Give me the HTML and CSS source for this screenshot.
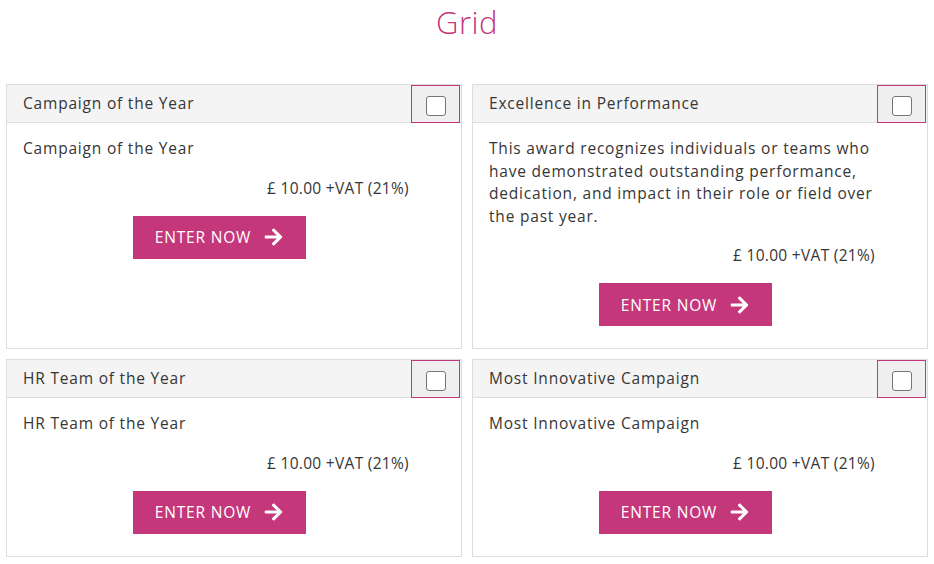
FILE: index.html
```html
<!DOCTYPE html>
<html>
<head>
<meta charset="utf-8">
<link rel="stylesheet" href="styles.css">
</head>
<body>
<h1 class="page-title">Grid</h1>
<div class="grid">
  <div class="card">
    <div class="card-head"><span class="card-name">Campaign of the Year</span><span class="check-cell"><span class="check"></span></span></div>
    <div class="card-body">
      <p class="desc">Campaign of the Year</p>
      <p class="price">£ 10.00 +VAT (21%)</p>
      <div class="btn-row"><a class="btn">ENTER NOW <svg class="arrow" viewBox="0 0 448 512"><path d="M190.5 66.9l22.2-22.2c9.4-9.4 24.6-9.4 33.9 0L441 239c9.4 9.4 9.4 24.6 0 33.9L246.6 467.3c-9.4 9.4-24.6 9.4-33.9 0l-22.2-22.2c-9.5-9.5-9.3-25 .4-34.3L311.4 296H24c-13.3 0-24-10.7-24-24v-32c0-13.3 10.7-24 24-24h287.4L190.9 101.2c-9.8-9.3-10-24.8-.4-34.3z" fill="#fff"/></svg></a></div>
    </div>
  </div>
  <div class="card">
    <div class="card-head"><span class="card-name">Excellence in Performance</span><span class="check-cell"><span class="check"></span></span></div>
    <div class="card-body">
      <p class="desc">This award recognizes individuals or teams who have demonstrated outstanding performance, dedication, and impact in their role or field over the past year.</p>
      <p class="price">£ 10.00 +VAT (21%)</p>
      <div class="btn-row"><a class="btn">ENTER NOW <svg class="arrow" viewBox="0 0 448 512"><path d="M190.5 66.9l22.2-22.2c9.4-9.4 24.6-9.4 33.9 0L441 239c9.4 9.4 9.4 24.6 0 33.9L246.6 467.3c-9.4 9.4-24.6 9.4-33.9 0l-22.2-22.2c-9.5-9.5-9.3-25 .4-34.3L311.4 296H24c-13.3 0-24-10.7-24-24v-32c0-13.3 10.7-24 24-24h287.4L190.9 101.2c-9.8-9.3-10-24.8-.4-34.3z" fill="#fff"/></svg></a></div>
    </div>
  </div>
  <div class="card">
    <div class="card-head"><span class="card-name">HR Team of the Year</span><span class="check-cell"><span class="check"></span></span></div>
    <div class="card-body">
      <p class="desc">HR Team of the Year</p>
      <p class="price">£ 10.00 +VAT (21%)</p>
      <div class="btn-row"><a class="btn">ENTER NOW <svg class="arrow" viewBox="0 0 448 512"><path d="M190.5 66.9l22.2-22.2c9.4-9.4 24.6-9.4 33.9 0L441 239c9.4 9.4 9.4 24.6 0 33.9L246.6 467.3c-9.4 9.4-24.6 9.4-33.9 0l-22.2-22.2c-9.5-9.5-9.3-25 .4-34.3L311.4 296H24c-13.3 0-24-10.7-24-24v-32c0-13.3 10.7-24 24-24h287.4L190.9 101.2c-9.8-9.3-10-24.8-.4-34.3z" fill="#fff"/></svg></a></div>
    </div>
  </div>
  <div class="card">
    <div class="card-head"><span class="card-name">Most Innovative Campaign</span><span class="check-cell"><span class="check"></span></span></div>
    <div class="card-body">
      <p class="desc">Most Innovative Campaign</p>
      <p class="price">£ 10.00 +VAT (21%)</p>
      <div class="btn-row"><a class="btn">ENTER NOW <svg class="arrow" viewBox="0 0 448 512"><path d="M190.5 66.9l22.2-22.2c9.4-9.4 24.6-9.4 33.9 0L441 239c9.4 9.4 9.4 24.6 0 33.9L246.6 467.3c-9.4 9.4-24.6 9.4-33.9 0l-22.2-22.2c-9.5-9.5-9.3-25 .4-34.3L311.4 296H24c-13.3 0-24-10.7-24-24v-32c0-13.3 10.7-24 24-24h287.4L190.9 101.2c-9.8-9.3-10-24.8-.4-34.3z" fill="#fff"/></svg></a></div>
    </div>
  </div>
</div>
</body>
</html>
```

FILE: styles.css
```css
* { box-sizing: border-box; }
body {
  margin: 0;
  background: #fff;
  font-family: "Open Sans", "DejaVu Sans", sans-serif;
  color: #363636;
  font-size: 15.5px;
  letter-spacing: 0.8px;
}
.page-title {
  margin: 0;
  padding-top: 2px;
  height: 84px;
  text-align: center;
  font-weight: 300;
  font-size: 31px;
  line-height: 40px;
  letter-spacing: 0.5px;
  color: #c5377b;
}
.grid {
  display: grid;
  grid-template-columns: 1fr 1fr;
  column-gap: 10px;
  row-gap: 10px;
  padding: 0 6px;
}
.card {
  border: 1px solid #ddd;
  display: flex;
  flex-direction: column;
}
.card-head {
  display: flex;
  align-items: stretch;
  background: #f4f4f4;
  border-bottom: 1px solid #ddd;
  height: 38px;
}
.card-name {
  flex: 1;
  display: flex;
  align-items: center;
  padding-left: 16px;
  padding-bottom: 1px;
}
.check-cell {
  width: 49px;
  margin-right: 1px;
  border: 1px solid #c5377b;
  background: #efefef;
  display: flex;
  align-items: center;
  justify-content: center;
  margin-bottom: -1px;
}
.check {
  width: 20px;
  height: 20px;
  background: #fff;
  border: 1px solid #767676;
  border-radius: 3px;
  margin-top: 4px;
}
.card-body {
  padding: 14px 16px 22px 16px;
  flex: 1;
}
.desc {
  margin: 0;
  line-height: 22.6px;
  padding-right: 24px;
}
.price {
  margin: 17px 0 0 0;
  line-height: 22px;
  text-align: right;
  padding-right: 36px;
  letter-spacing: 0.3px;
}
.btn-row {
  margin-top: 17px;
  display: flex;
  justify-content: center;
  padding-right: 30px;
}
.btn {
  display: inline-flex;
  align-items: center;
  gap: 13px;
  background: #c5377b;
  color: #fff;
  height: 43px;
  width: 173px;
  justify-content: center;
}
.arrow {
  width: 19px;
  height: 20px;
}
```
